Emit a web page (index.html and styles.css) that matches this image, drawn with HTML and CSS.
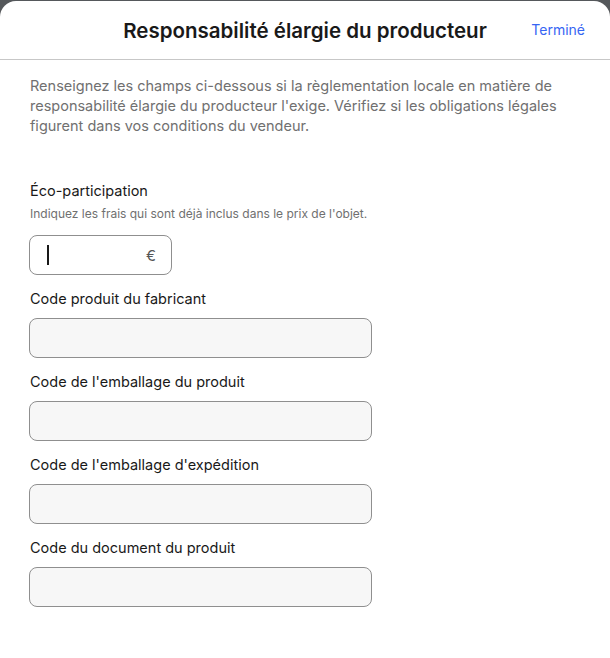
FILE: index.html
```html
<!DOCTYPE html>
<html lang="fr">
<head>
  <meta charset="UTF-8">
  <meta name="viewport" content="width=device-width, initial-scale=1.0">
  <title>Responsabilité élargie du producteur</title>
  <link rel="stylesheet" href="styles.css">
</head>
<body>

<div class="sheet">
  <header class="sheet-header">
    <h2>Responsabilité élargie du producteur</h2>
    <button class="done">Terminé</button>
  </header>

  <div class="sheet-body">
    <p class="intro">Renseignez les champs ci-dessous si la règlementation locale en matière de responsabilité élargie du producteur l'exige. Vérifiez si les obligations légales figurent dans vos conditions du vendeur.</p>

    <div class="field first">
      <label>Éco-participation</label>
      <span class="hint">Indiquez les frais qui sont déjà inclus dans le prix de l'objet.</span>
      <div class="price-box">
        <span class="caret"></span>
        <span class="currency">€</span>
      </div>
    </div>

    <div class="field">
      <label>Code produit du fabricant</label>
      <input type="text" class="text-box">
    </div>

    <div class="field">
      <label>Code de l'emballage du produit</label>
      <input type="text" class="text-box">
    </div>

    <div class="field">
      <label>Code de l'emballage d'expédition</label>
      <input type="text" class="text-box">
    </div>

    <div class="field">
      <label>Code du document du produit</label>
      <input type="text" class="text-box">
    </div>
  </div>
</div>

</body>
</html>
```

FILE: styles.css
```css
body {
  font-family: Inter, "Liberation Sans", sans-serif;
  margin: 0;
  padding: 1px 0 0;
  background-color: #55585b;
  height: 657px;
  overflow: hidden;
}

.sheet {
  background-color: #ffffff;
  border-radius: 16px 16px 0 0;
  height: 100%;
}

.sheet-header {
  position: relative;
  height: 58px;
  border-bottom: 1px solid #c7c7c7;
  display: flex;
  align-items: center;
  justify-content: center;
}

.sheet-header h2 {
  margin: 0;
  font-size: 20.5px;
  font-weight: 600;
  color: #191919;
}

.sheet-header .done {
  position: absolute;
  right: 25px;
  top: 20px;
  border: none;
  background: none;
  padding: 0;
  font-family: inherit;
  font-size: 14px;
  color: #3665f3;
  cursor: pointer;
}

.sheet-body {
  padding: 16px 30px 0;
}

.intro {
  margin: 0 0 45px;
  font-size: 14.5px;
  line-height: 20px;
  color: #707070;
}

.field {
  display: flex;
  flex-direction: column;
  margin-bottom: 14px;
}

.field label {
  font-size: 14.5px;
  line-height: 20px;
  color: #191919;
  margin-bottom: 9px;
}

.field.first label {
  margin-bottom: 5px;
}

.hint {
  font-size: 12px;
  line-height: 16px;
  color: #707070;
  margin-bottom: 13px;
}

.price-box {
  width: 143px;
  height: 40px;
  box-sizing: border-box;
  margin-left: -1px;
  border: 1px solid #8f8f8f;
  border-radius: 8px;
  display: flex;
  align-items: center;
  justify-content: space-between;
  padding: 0 15px 0 17px;
}

.caret {
  width: 1.5px;
  height: 20px;
  background-color: #191919;
}

.currency {
  font-size: 15px;
  color: #555555;
}

.text-box {
  width: 343px;
  height: 40px;
  box-sizing: border-box;
  margin: 0 0 0 -1px;
  border: 1px solid #8f8f8f;
  border-radius: 8px;
  background-color: #f7f7f7;
  font-family: inherit;
  font-size: 15px;
  padding: 0 16px;
}
```
